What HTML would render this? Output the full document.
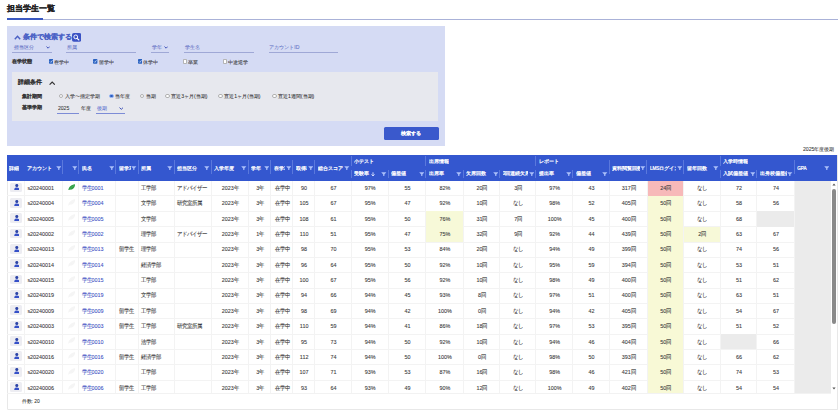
<!DOCTYPE html><html><head><meta charset="utf-8"><style>
*{box-sizing:border-box;margin:0;padding:0}
html,body{width:840px;height:415px;overflow:hidden;background:#fff}
body{position:relative;font-family:"Liberation Sans",sans-serif;color:#333;-webkit-text-stroke:0.06px currentColor}
.b{-webkit-text-stroke:0.04px currentColor}
.bt{-webkit-text-stroke:0.18px currentColor}
.ht{-webkit-text-stroke:0;font-weight:normal!important;-webkit-text-stroke:0.22px #fff}
.a{position:absolute;white-space:nowrap}
.b{font-weight:bold}
.cb{position:absolute;width:4.3px;height:4.3px;border-radius:0.8px}
.cb.on{background:#2f6fd8}
.cb.off{background:#fff;border:0.45px solid #b5b5b5;border-radius:0.8px}
.rd{position:absolute;width:4.6px;height:4.6px;border-radius:50%;background:#fff;border:0.4px solid #b0b0b0}
.rd.on{background:#2a5cc0;border:0.8px solid #9ab8f4}
.ul{position:absolute;height:1px;background:#9fa8d6}
.hd{position:absolute;top:155px;height:25.5px;background:#3457cf}
.ht{position:absolute;color:#fff;font-weight:bold;font-size:4.65px;white-space:nowrap;overflow:hidden}
.sep{position:absolute;width:1px;background:#5a78dc;margin-left:-0.5px}
.fl{position:absolute;width:0;height:0;border-left:2.4px solid transparent;border-right:2.4px solid transparent;border-top:3px solid #a9bdf7}
.fl:after{content:"";position:absolute;left:-0.7px;top:-0.5px;width:1.4px;height:2.4px;background:#a9bdf7}
.c{position:absolute;transform:scaleY(1.12);font-size:5.4px;color:#3a3a3a;-webkit-text-stroke:0.08px currentColor;white-space:nowrap;text-align:center}
.rl{position:absolute;height:0.8px;background:#f3f3f3}
.vl{position:absolute;width:0.8px;background:#f3f3f3}
</style></head><body><div class="a b bt" style="left:6.5px;top:3px;font-size:8.1px;line-height:11px;color:#222">担当学生一覧</div>
<div class="a" style="left:43px;top:19px;width:795px;height:1px;background:#aab2d8"></div>
<div class="a" style="left:6.5px;top:18px;width:36.5px;height:2px;background:#3b59c0"></div>
<div class="a" style="left:6.5px;top:26px;width:438.5px;height:119.5px;background:#d5dbf4"></div>
<svg class="a" style="left:14px;top:35px" width="7" height="5" viewBox="0 0 7 5"><path d="M0.8 4.2 L3.5 1.2 L6.2 4.2" fill="none" stroke="#4a5fc4" stroke-width="1.4"/></svg>
<div class="a b bt" style="left:22.9px;top:32px;font-size:6.9px;line-height:9px;color:#4c62c6">条件で検索する</div>
<svg class="a" style="left:72px;top:33px" width="9.2" height="8.8" viewBox="0 0 9.2 8.8"><rect width="9.2" height="8.8" rx="1.8" fill="#3a52c4"/><circle cx="3.75" cy="3.9" r="1.9" fill="none" stroke="#fff" stroke-width="0.95"/><line x1="5.1" y1="5.3" x2="6.9" y2="7" stroke="#fff" stroke-width="1.1" stroke-linecap="round"/></svg>
<div class="a" style="left:13.8px;top:43.5px;font-size:5.2px;line-height:7px;color:#5f6fc4">担当区分</div>
<svg class="a" style="left:46px;top:46.4px" width="4.2" height="3" viewBox="0 0 4.2 3"><path d="M0.5 0.6 L2.1 2.2 L3.7 0.6" fill="none" stroke="#3f52b8" stroke-width="1"/></svg>
<div class="ul" style="left:12.4px;top:51.5px;width:39.5px"></div>
<div class="a" style="left:66.7px;top:43.5px;font-size:5.2px;line-height:7px;color:#5f6fc4">所属</div>
<div class="ul" style="left:66.2px;top:51.5px;width:69.5px"></div>
<div class="a" style="left:152px;top:43.5px;font-size:5.2px;line-height:7px;color:#5f6fc4">学年</div>
<svg class="a" style="left:163.6px;top:46.4px" width="4.2" height="3" viewBox="0 0 4.2 3"><path d="M0.5 0.6 L2.1 2.2 L3.7 0.6" fill="none" stroke="#3f52b8" stroke-width="1"/></svg>
<div class="ul" style="left:150.7px;top:51.5px;width:18.6px"></div>
<div class="a" style="left:185px;top:43.5px;font-size:5.2px;line-height:7px;color:#5f6fc4">学生名</div>
<div class="ul" style="left:184px;top:51.5px;width:69.6px"></div>
<div class="a" style="left:269.3px;top:43.5px;font-size:5.2px;line-height:7px;color:#5f6fc4">アカウントID</div>
<div class="ul" style="left:268.75px;top:51.5px;width:69.6px"></div>
<div class="a b" style="left:12.3px;top:58px;font-size:5.2px;line-height:7px;color:#333">在学状態</div>
<svg class="a" style="left:48.9px;top:59px" width="4.4" height="4.7" viewBox="0 0 4.4 4.7"><rect x="0" y="0" width="4.4" height="4.7" rx="0.8" fill="#2a62c0"/><path d="M1 2.5 L1.9 3.4 L3.5 1.3" fill="none" stroke="#dfe9ff" stroke-width="0.7"/></svg>
<div class="a" style="left:54.4px;top:58.8px;font-size:5.2px;line-height:7px;color:#333">在学中</div>
<svg class="a" style="left:93.3px;top:59px" width="4.4" height="4.7" viewBox="0 0 4.4 4.7"><rect x="0" y="0" width="4.4" height="4.7" rx="0.8" fill="#2a62c0"/><path d="M1 2.5 L1.9 3.4 L3.5 1.3" fill="none" stroke="#dfe9ff" stroke-width="0.7"/></svg>
<div class="a" style="left:98.8px;top:58.8px;font-size:5.2px;line-height:7px;color:#333">留学中</div>
<svg class="a" style="left:137.9px;top:59px" width="4.4" height="4.7" viewBox="0 0 4.4 4.7"><rect x="0" y="0" width="4.4" height="4.7" rx="0.8" fill="#2a62c0"/><path d="M1 2.5 L1.9 3.4 L3.5 1.3" fill="none" stroke="#dfe9ff" stroke-width="0.7"/></svg>
<div class="a" style="left:143.4px;top:58.8px;font-size:5.2px;line-height:7px;color:#333">休学中</div>
<div class="cb off" style="left:183px;top:59.4px"></div>
<div class="a" style="left:188.4px;top:58.8px;font-size:5.2px;line-height:7px;color:#333">卒業</div>
<div class="cb off" style="left:223px;top:59.4px"></div>
<div class="a" style="left:228.4px;top:58.8px;font-size:5.2px;line-height:7px;color:#333">中途退学</div>
<div class="a" style="left:11.6px;top:72px;width:426.8px;height:48.5px;background:#e7e8ee"></div>
<div class="a b" style="left:18px;top:78.3px;font-size:6px;line-height:8px;color:#333">詳細条件</div>
<svg class="a" style="left:48.8px;top:81.2px" width="6.4" height="4.2" viewBox="0 0 6.4 4.2"><path d="M0.6 3.7 L3.2 1 L5.8 3.7" fill="none" stroke="#333" stroke-width="1.1"/></svg>
<div class="a b" style="left:21.7px;top:92.6px;font-size:5.1px;line-height:7px;color:#333">集計期間</div>
<div class="a b" style="left:21.7px;top:104px;font-size:5.1px;line-height:7px;color:#333">基準学期</div>
<div class="rd " style="left:58.6px;top:93.6px"></div>
<div class="a" style="left:64.6px;top:93.3px;font-size:5.1px;line-height:7px;color:#333">入学〜指定学期</div>
<div class="rd on" style="left:109.4px;top:93.6px"></div>
<div class="a" style="left:115.4px;top:93.3px;font-size:5.1px;line-height:7px;color:#333">当年度</div>
<div class="rd " style="left:139.7px;top:93.6px"></div>
<div class="a" style="left:145.7px;top:93.3px;font-size:5.1px;line-height:7px;color:#333">当期</div>
<div class="rd " style="left:165.2px;top:93.6px"></div>
<div class="a" style="left:171.2px;top:93.3px;font-size:5.1px;line-height:7px;color:#333">直近3ヶ月(当期)</div>
<div class="rd " style="left:218.3px;top:93.6px"></div>
<div class="a" style="left:224.3px;top:93.3px;font-size:5.1px;line-height:7px;color:#333">直近1ヶ月(当期)</div>
<div class="rd " style="left:272px;top:93.6px"></div>
<div class="a" style="left:278px;top:93.3px;font-size:5.1px;line-height:7px;color:#333">直近1週間(当期)</div>
<div class="a" style="left:57.9px;top:104.9px;font-size:5.1px;line-height:7px;color:#333">2025</div>
<div class="a" style="left:56.9px;top:112.5px;width:21.7px;height:0.7px;background:#7d8cd6"></div>
<div class="a" style="left:80.7px;top:104.9px;font-size:5.1px;line-height:7px;color:#333">年度</div>
<div class="a" style="left:97px;top:104.9px;font-size:5.1px;line-height:7px;color:#5a6fd0">後期</div>
<svg class="a" style="left:118.8px;top:107.4px" width="4.6" height="3" viewBox="0 0 4.6 3"><path d="M0.5 0.6 L2.3 2.3 L4.1 0.6" fill="none" stroke="#3f52b8" stroke-width="1"/></svg>
<div class="a" style="left:96px;top:112.5px;width:29px;height:0.7px;background:#7d8cd6"></div>
<div class="a b" style="left:383.6px;top:127px;width:55.4px;height:12.7px;background:#3a59cc;border-radius:1.5px;color:#fff;font-size:5.2px;line-height:12.7px;text-align:center">検索する</div>
<div class="a" style="left:802.9px;top:145.6px;font-size:5.2px;line-height:7px;color:#333">2025年度後期</div>
<div class="a" style="left:6.5px;top:155px;width:831px;height:255px;border:1px solid #e8e8e8;border-top:none;border-radius:0 0 1.5px 1.5px"></div>
<div class="a" style="left:7px;top:393px;width:824px;height:0.8px;background:#f2f2f2"></div>
<div class="hd" style="left:7px;width:830px"></div>
<div class="ht" style="left:8.9px;top:165.5px;line-height:6px">詳細</div>
<div class="ht" style="left:27.4px;top:165.5px;line-height:6px;width:27.8px">アカウント</div>
<svg class="a" style="left:55.6px;top:165.7px" width="5.6" height="4.8" viewBox="0 0 5.6 4.8"><path d="M0.2 0.3 H5.4 L3.4 2.6 V4.5 L2.2 4.5 V2.6 Z" fill="#abc0fa"/></svg>
<svg class="a" style="left:71.7px;top:165.7px" width="5.6" height="4.8" viewBox="0 0 5.6 4.8"><path d="M0.2 0.3 H5.4 L3.4 2.6 V4.5 L2.2 4.5 V2.6 Z" fill="#abc0fa"/></svg>
<div class="sep" style="left:62.5px;top:160.2px;height:13.7px"></div>
<div class="ht" style="left:81.6px;top:165.5px;line-height:6px;width:26.9px">氏名</div>
<svg class="a" style="left:108.9px;top:165.7px" width="5.6" height="4.8" viewBox="0 0 5.6 4.8"><path d="M0.2 0.3 H5.4 L3.4 2.6 V4.5 L2.2 4.5 V2.6 Z" fill="#abc0fa"/></svg>
<div class="sep" style="left:78.6px;top:160.2px;height:13.7px"></div>
<div class="ht" style="left:118.8px;top:165.5px;line-height:6px;width:12.1px">留学ｽﾃ</div>
<svg class="a" style="left:131.3px;top:165.7px" width="5.6" height="4.8" viewBox="0 0 5.6 4.8"><path d="M0.2 0.3 H5.4 L3.4 2.6 V4.5 L2.2 4.5 V2.6 Z" fill="#abc0fa"/></svg>
<div class="sep" style="left:115.8px;top:160.2px;height:13.7px"></div>
<div class="ht" style="left:141.2px;top:165.5px;line-height:6px;width:25.7px">所属</div>
<svg class="a" style="left:167.3px;top:165.7px" width="5.6" height="4.8" viewBox="0 0 5.6 4.8"><path d="M0.2 0.3 H5.4 L3.4 2.6 V4.5 L2.2 4.5 V2.6 Z" fill="#abc0fa"/></svg>
<div class="sep" style="left:138.2px;top:160.2px;height:13.7px"></div>
<div class="ht" style="left:177.2px;top:165.5px;line-height:6px;width:26.5px">担当区分</div>
<svg class="a" style="left:204.1px;top:165.7px" width="5.6" height="4.8" viewBox="0 0 5.6 4.8"><path d="M0.2 0.3 H5.4 L3.4 2.6 V4.5 L2.2 4.5 V2.6 Z" fill="#abc0fa"/></svg>
<div class="sep" style="left:174.2px;top:160.2px;height:13.7px"></div>
<div class="ht" style="left:214px;top:165.5px;line-height:6px;width:27px">入学年度</div>
<svg class="a" style="left:241.4px;top:165.7px" width="5.6" height="4.8" viewBox="0 0 5.6 4.8"><path d="M0.2 0.3 H5.4 L3.4 2.6 V4.5 L2.2 4.5 V2.6 Z" fill="#abc0fa"/></svg>
<div class="sep" style="left:211px;top:160.2px;height:13.7px"></div>
<div class="ht" style="left:251.3px;top:165.5px;line-height:6px;width:12.2px">学年</div>
<svg class="a" style="left:263.9px;top:165.7px" width="5.6" height="4.8" viewBox="0 0 5.6 4.8"><path d="M0.2 0.3 H5.4 L3.4 2.6 V4.5 L2.2 4.5 V2.6 Z" fill="#abc0fa"/></svg>
<div class="sep" style="left:248.3px;top:160.2px;height:13.7px"></div>
<div class="ht" style="left:273.8px;top:165.5px;line-height:6px;width:11.4px">在学ｽﾃ</div>
<svg class="a" style="left:285.6px;top:165.7px" width="5.6" height="4.8" viewBox="0 0 5.6 4.8"><path d="M0.2 0.3 H5.4 L3.4 2.6 V4.5 L2.2 4.5 V2.6 Z" fill="#abc0fa"/></svg>
<div class="sep" style="left:270.8px;top:160.2px;height:13.7px"></div>
<div class="ht" style="left:295.5px;top:165.5px;line-height:6px;width:11.7px">取得単位</div>
<svg class="a" style="left:307.6px;top:165.7px" width="5.6" height="4.8" viewBox="0 0 5.6 4.8"><path d="M0.2 0.3 H5.4 L3.4 2.6 V4.5 L2.2 4.5 V2.6 Z" fill="#abc0fa"/></svg>
<div class="sep" style="left:292.5px;top:160.2px;height:13.7px"></div>
<div class="ht" style="left:317.5px;top:165.5px;line-height:6px;width:26.5px">総合スコア</div>
<svg class="a" style="left:344.4px;top:165.7px" width="5.6" height="4.8" viewBox="0 0 5.6 4.8"><path d="M0.2 0.3 H5.4 L3.4 2.6 V4.5 L2.2 4.5 V2.6 Z" fill="#abc0fa"/></svg>
<div class="sep" style="left:314.5px;top:160.2px;height:13.7px"></div>
<div class="ht" style="left:612.2px;top:165.5px;line-height:6px;width:27.4px">資料閲覧回数</div>
<svg class="a" style="left:640px;top:165.7px" width="5.6" height="4.8" viewBox="0 0 5.6 4.8"><path d="M0.2 0.3 H5.4 L3.4 2.6 V4.5 L2.2 4.5 V2.6 Z" fill="#abc0fa"/></svg>
<div class="sep" style="left:609.2px;top:160.2px;height:13.7px"></div>
<div class="ht" style="left:649.9px;top:165.5px;line-height:6px;width:26.3px">LMSログイン</div>
<svg class="a" style="left:676.6px;top:165.7px" width="5.6" height="4.8" viewBox="0 0 5.6 4.8"><path d="M0.2 0.3 H5.4 L3.4 2.6 V4.5 L2.2 4.5 V2.6 Z" fill="#abc0fa"/></svg>
<div class="sep" style="left:646.9px;top:160.2px;height:13.7px"></div>
<div class="ht" style="left:686.5px;top:165.5px;line-height:6px;width:26.2px">留年回数</div>
<svg class="a" style="left:713.1px;top:165.7px" width="5.6" height="4.8" viewBox="0 0 5.6 4.8"><path d="M0.2 0.3 H5.4 L3.4 2.6 V4.5 L2.2 4.5 V2.6 Z" fill="#abc0fa"/></svg>
<div class="sep" style="left:683.5px;top:160.2px;height:13.7px"></div>
<div class="ht" style="left:797.2px;top:165.5px;line-height:6px;width:26.3px">GPA</div>
<svg class="a" style="left:823.9px;top:165.7px" width="5.6" height="4.8" viewBox="0 0 5.6 4.8"><path d="M0.2 0.3 H5.4 L3.4 2.6 V4.5 L2.2 4.5 V2.6 Z" fill="#abc0fa"/></svg>
<div class="sep" style="left:794.2px;top:160.2px;height:13.7px"></div>
<div class="ht" style="left:354.3px;top:158.9px;line-height:6px">小テスト</div>
<div class="sep" style="left:351.3px;top:156.2px;height:9.5px"></div>
<div class="sep" style="left:351.3px;top:169.9px;height:7.7px"></div>
<div class="ht" style="left:354.3px;top:171.1px;line-height:6px;width:26.4px">受験率</div>
<svg class="a" style="left:381.1px;top:171.7px" width="5.6" height="4.8" viewBox="0 0 5.6 4.8"><path d="M0.2 0.3 H5.4 L3.4 2.6 V4.5 L2.2 4.5 V2.6 Z" fill="#abc0fa"/></svg>
<div class="ht" style="left:391px;top:171.1px;line-height:6px;width:27.3px">偏差値</div>
<svg class="a" style="left:418.7px;top:171.7px" width="5.6" height="4.8" viewBox="0 0 5.6 4.8"><path d="M0.2 0.3 H5.4 L3.4 2.6 V4.5 L2.2 4.5 V2.6 Z" fill="#abc0fa"/></svg>
<div class="sep" style="left:388px;top:169.9px;height:7.7px"></div>
<div class="ht" style="left:428.6px;top:158.9px;line-height:6px">出席情報</div>
<div class="sep" style="left:425.6px;top:156.2px;height:9.5px"></div>
<div class="sep" style="left:425.6px;top:169.9px;height:7.7px"></div>
<div class="ht" style="left:428.6px;top:171.1px;line-height:6px;width:27.1px">出席率</div>
<svg class="a" style="left:456.1px;top:171.7px" width="5.6" height="4.8" viewBox="0 0 5.6 4.8"><path d="M0.2 0.3 H5.4 L3.4 2.6 V4.5 L2.2 4.5 V2.6 Z" fill="#abc0fa"/></svg>
<div class="ht" style="left:466px;top:171.1px;line-height:6px;width:26.4px">欠席回数</div>
<svg class="a" style="left:492.8px;top:171.7px" width="5.6" height="4.8" viewBox="0 0 5.6 4.8"><path d="M0.2 0.3 H5.4 L3.4 2.6 V4.5 L2.2 4.5 V2.6 Z" fill="#abc0fa"/></svg>
<div class="sep" style="left:463px;top:169.9px;height:7.7px"></div>
<div class="ht" style="left:502.7px;top:171.1px;line-height:6px;width:25.8px">3回連続欠席</div>
<svg class="a" style="left:528.9px;top:171.7px" width="5.6" height="4.8" viewBox="0 0 5.6 4.8"><path d="M0.2 0.3 H5.4 L3.4 2.6 V4.5 L2.2 4.5 V2.6 Z" fill="#abc0fa"/></svg>
<div class="sep" style="left:499.7px;top:169.9px;height:7.7px"></div>
<div class="ht" style="left:538.8px;top:158.9px;line-height:6px">レポート</div>
<div class="sep" style="left:535.8px;top:156.2px;height:9.5px"></div>
<div class="sep" style="left:535.8px;top:169.9px;height:7.7px"></div>
<div class="ht" style="left:538.8px;top:171.1px;line-height:6px;width:26.4px">提出率</div>
<svg class="a" style="left:565.6px;top:171.7px" width="5.6" height="4.8" viewBox="0 0 5.6 4.8"><path d="M0.2 0.3 H5.4 L3.4 2.6 V4.5 L2.2 4.5 V2.6 Z" fill="#abc0fa"/></svg>
<div class="ht" style="left:575.5px;top:171.1px;line-height:6px;width:26.4px">偏差値</div>
<svg class="a" style="left:602.3px;top:171.7px" width="5.6" height="4.8" viewBox="0 0 5.6 4.8"><path d="M0.2 0.3 H5.4 L3.4 2.6 V4.5 L2.2 4.5 V2.6 Z" fill="#abc0fa"/></svg>
<div class="sep" style="left:572.5px;top:169.9px;height:7.7px"></div>
<div class="ht" style="left:723px;top:158.9px;line-height:6px">入学時情報</div>
<div class="sep" style="left:720px;top:156.2px;height:9.5px"></div>
<div class="sep" style="left:720px;top:169.9px;height:7.7px"></div>
<div class="ht" style="left:723px;top:171.1px;line-height:6px;width:26.4px">入試偏差値</div>
<svg class="a" style="left:749.8px;top:171.7px" width="5.6" height="4.8" viewBox="0 0 5.6 4.8"><path d="M0.2 0.3 H5.4 L3.4 2.6 V4.5 L2.2 4.5 V2.6 Z" fill="#abc0fa"/></svg>
<div class="ht" style="left:759.7px;top:171.1px;line-height:6px;width:27.2px">出身校偏差値</div>
<svg class="a" style="left:787.3px;top:171.7px" width="5.6" height="4.8" viewBox="0 0 5.6 4.8"><path d="M0.2 0.3 H5.4 L3.4 2.6 V4.5 L2.2 4.5 V2.6 Z" fill="#abc0fa"/></svg>
<div class="sep" style="left:756.7px;top:169.9px;height:7.7px"></div>
<div class="sep" style="left:794.2px;top:160.2px;height:13.7px"></div>
<svg class="a" style="left:371.2px;top:171.6px" width="4" height="4.6" viewBox="0 0 4 4.6"><path d="M2 0.3 V4 M0.5 2.4 L2 4 L3.5 2.4" fill="none" stroke="#dfe6ff" stroke-width="0.9"/></svg>
<div class="a" style="left:7px;top:180.5px;width:824.3px;height:212.5px;overflow:hidden">
<div class="rl" style="left:0;top:14.95px;width:824.3px"></div>
<div class="a" style="left:2.9px;top:2.1px;width:12.3px;height:9.8px;background:#ededf2;border-radius:1.5px"></div>
<svg class="a" style="left:6.9px;top:3.7px" width="5.6" height="6.2" viewBox="0 0 5.6 6.2"><circle cx="2.8" cy="1.6" r="1.5" fill="#2b43a6"/><path d="M0.3 6 V5.3 C0.3 4.1 1.4 3.5 2.8 3.5 C4.2 3.5 5.3 4.1 5.3 5.3 V6 Z" fill="#3550c8"/></svg>
<div class="c" style="left:20.4px;top:0.5px;line-height:15.35px;text-align:left;color:#3a3a3a">s20240001</div>
<svg class="a" style="left:60.7px;top:3.1px" width="7.4" height="6.8" viewBox="0 0 7.4 6.8"><path d="M0.3 6.5 C0.6 3.4 2.6 0.9 7.1 0.3 C7 3.6 5.2 6.1 1.9 5.6 C1.4 5.9 0.9 6.3 0.6 6.7 Z" fill="#34a048"/><path d="M1.2 5.8 C2.8 4 4.6 2.2 6.6 0.8" stroke="#5cc06a" stroke-width="0.4" fill="none"/></svg>
<div class="c" style="left:74.6px;top:0.5px;line-height:15.35px;text-align:left;color:#4252c4">学生0001</div>
<div class="c" style="left:134.2px;top:0.5px;line-height:15.35px;text-align:left;color:#3a3a3a">工学部</div>
<div class="c" style="left:170.2px;top:0.5px;line-height:15.35px;text-align:left;color:#3a3a3a">アドバイザー</div>
<div class="c" style="left:204.6px;top:0.5px;width:37.3px;line-height:15.35px">2023年</div>
<div class="c" style="left:241.9px;top:0.5px;width:22.5px;line-height:15.35px">3年</div>
<div class="c" style="left:264.4px;top:0.5px;width:21.7px;line-height:15.35px">在学中</div>
<div class="c" style="left:286.1px;top:0.5px;width:22px;line-height:15.35px">90</div>
<div class="c" style="left:308.1px;top:0.5px;width:36.8px;line-height:15.35px">67</div>
<div class="c" style="left:344.9px;top:0.5px;width:36.7px;line-height:15.35px">97%</div>
<div class="c" style="left:381.6px;top:0.5px;width:37.6px;line-height:15.35px">55</div>
<div class="c" style="left:419.2px;top:0.5px;width:37.4px;line-height:15.35px">82%</div>
<div class="c" style="left:456.6px;top:0.5px;width:36.7px;line-height:15.35px">20回</div>
<div class="c" style="left:493.3px;top:0.5px;width:36.1px;line-height:15.35px">3回</div>
<div class="c" style="left:529.4px;top:0.5px;width:36.7px;line-height:15.35px">97%</div>
<div class="c" style="left:566.1px;top:0.5px;width:36.7px;line-height:15.35px">43</div>
<div class="c" style="left:602.8px;top:0.5px;width:37.7px;line-height:15.35px">317回</div>
<div class="a" style="left:639.9px;top:0px;width:36.6px;height:15.35px;background:#f7b9b9"></div>
<div class="c" style="left:640.5px;top:0.5px;width:36.6px;line-height:15.35px">24回</div>
<div class="c" style="left:677.1px;top:0.5px;width:36.5px;line-height:15.35px">なし</div>
<div class="c" style="left:713.6px;top:0.5px;width:36.7px;line-height:15.35px">72</div>
<div class="c" style="left:750.3px;top:0.5px;width:37.5px;line-height:15.35px">74</div>
<div class="a" style="left:787.2px;top:0px;width:37.1px;height:15.35px;background:#ebebeb"></div>
<div class="rl" style="left:0;top:30.3px;width:824.3px"></div>
<div class="a" style="left:2.9px;top:17.45px;width:12.3px;height:9.8px;background:#ededf2;border-radius:1.5px"></div>
<svg class="a" style="left:6.9px;top:19.05px" width="5.6" height="6.2" viewBox="0 0 5.6 6.2"><circle cx="2.8" cy="1.6" r="1.5" fill="#2b43a6"/><path d="M0.3 6 V5.3 C0.3 4.1 1.4 3.5 2.8 3.5 C4.2 3.5 5.3 4.1 5.3 5.3 V6 Z" fill="#3550c8"/></svg>
<div class="c" style="left:20.4px;top:15.85px;line-height:15.35px;text-align:left;color:#3a3a3a">s20240004</div>
<svg class="a" style="left:60.7px;top:18.45px" width="7.4" height="6.8" viewBox="0 0 7.4 6.8"><path d="M0.3 6.5 C0.6 3.4 2.6 0.9 7.1 0.3 C7 3.6 5.2 6.1 1.9 5.6 C1.4 5.9 0.9 6.3 0.6 6.7 Z" fill="#f5f5f5"/><path d="M1.2 5.8 C2.8 4 4.6 2.2 6.6 0.8" stroke="#f5f5f5" stroke-width="0.4" fill="none"/></svg>
<div class="c" style="left:74.6px;top:15.85px;line-height:15.35px;text-align:left;color:#4252c4">学生0004</div>
<div class="c" style="left:134.2px;top:15.85px;line-height:15.35px;text-align:left;color:#3a3a3a">文学部</div>
<div class="c" style="left:170.2px;top:15.85px;line-height:15.35px;text-align:left;color:#3a3a3a">研究室所属</div>
<div class="c" style="left:204.6px;top:15.85px;width:37.3px;line-height:15.35px">2023年</div>
<div class="c" style="left:241.9px;top:15.85px;width:22.5px;line-height:15.35px">3年</div>
<div class="c" style="left:264.4px;top:15.85px;width:21.7px;line-height:15.35px">在学中</div>
<div class="c" style="left:286.1px;top:15.85px;width:22px;line-height:15.35px">105</div>
<div class="c" style="left:308.1px;top:15.85px;width:36.8px;line-height:15.35px">67</div>
<div class="c" style="left:344.9px;top:15.85px;width:36.7px;line-height:15.35px">95%</div>
<div class="c" style="left:381.6px;top:15.85px;width:37.6px;line-height:15.35px">47</div>
<div class="c" style="left:419.2px;top:15.85px;width:37.4px;line-height:15.35px">92%</div>
<div class="c" style="left:456.6px;top:15.85px;width:36.7px;line-height:15.35px">10回</div>
<div class="c" style="left:493.3px;top:15.85px;width:36.1px;line-height:15.35px">なし</div>
<div class="c" style="left:529.4px;top:15.85px;width:36.7px;line-height:15.35px">98%</div>
<div class="c" style="left:566.1px;top:15.85px;width:36.7px;line-height:15.35px">52</div>
<div class="c" style="left:602.8px;top:15.85px;width:37.7px;line-height:15.35px">405回</div>
<div class="a" style="left:639.9px;top:15.35px;width:36.6px;height:15.35px;background:#f8f9d6"></div>
<div class="c" style="left:640.5px;top:15.85px;width:36.6px;line-height:15.35px">50回</div>
<div class="c" style="left:677.1px;top:15.85px;width:36.5px;line-height:15.35px">なし</div>
<div class="c" style="left:713.6px;top:15.85px;width:36.7px;line-height:15.35px">58</div>
<div class="c" style="left:750.3px;top:15.85px;width:37.5px;line-height:15.35px">56</div>
<div class="a" style="left:787.2px;top:15.35px;width:37.1px;height:15.35px;background:#ebebeb"></div>
<div class="rl" style="left:0;top:45.65px;width:824.3px"></div>
<div class="a" style="left:2.9px;top:32.8px;width:12.3px;height:9.8px;background:#ededf2;border-radius:1.5px"></div>
<svg class="a" style="left:6.9px;top:34.4px" width="5.6" height="6.2" viewBox="0 0 5.6 6.2"><circle cx="2.8" cy="1.6" r="1.5" fill="#2b43a6"/><path d="M0.3 6 V5.3 C0.3 4.1 1.4 3.5 2.8 3.5 C4.2 3.5 5.3 4.1 5.3 5.3 V6 Z" fill="#3550c8"/></svg>
<div class="c" style="left:20.4px;top:31.2px;line-height:15.35px;text-align:left;color:#3a3a3a">s20240005</div>
<svg class="a" style="left:60.7px;top:33.8px" width="7.4" height="6.8" viewBox="0 0 7.4 6.8"><path d="M0.3 6.5 C0.6 3.4 2.6 0.9 7.1 0.3 C7 3.6 5.2 6.1 1.9 5.6 C1.4 5.9 0.9 6.3 0.6 6.7 Z" fill="#f5f5f5"/><path d="M1.2 5.8 C2.8 4 4.6 2.2 6.6 0.8" stroke="#f5f5f5" stroke-width="0.4" fill="none"/></svg>
<div class="c" style="left:74.6px;top:31.2px;line-height:15.35px;text-align:left;color:#4252c4">学生0005</div>
<div class="c" style="left:134.2px;top:31.2px;line-height:15.35px;text-align:left;color:#3a3a3a">文学部</div>
<div class="c" style="left:204.6px;top:31.2px;width:37.3px;line-height:15.35px">2023年</div>
<div class="c" style="left:241.9px;top:31.2px;width:22.5px;line-height:15.35px">3年</div>
<div class="c" style="left:264.4px;top:31.2px;width:21.7px;line-height:15.35px">在学中</div>
<div class="c" style="left:286.1px;top:31.2px;width:22px;line-height:15.35px">108</div>
<div class="c" style="left:308.1px;top:31.2px;width:36.8px;line-height:15.35px">61</div>
<div class="c" style="left:344.9px;top:31.2px;width:36.7px;line-height:15.35px">95%</div>
<div class="c" style="left:381.6px;top:31.2px;width:37.6px;line-height:15.35px">50</div>
<div class="a" style="left:418.6px;top:30.7px;width:37.4px;height:15.35px;background:#f7f9d8"></div>
<div class="c" style="left:419.2px;top:31.2px;width:37.4px;line-height:15.35px">76%</div>
<div class="c" style="left:456.6px;top:31.2px;width:36.7px;line-height:15.35px">31回</div>
<div class="c" style="left:493.3px;top:31.2px;width:36.1px;line-height:15.35px">7回</div>
<div class="c" style="left:529.4px;top:31.2px;width:36.7px;line-height:15.35px">100%</div>
<div class="c" style="left:566.1px;top:31.2px;width:36.7px;line-height:15.35px">45</div>
<div class="c" style="left:602.8px;top:31.2px;width:37.7px;line-height:15.35px">400回</div>
<div class="a" style="left:639.9px;top:30.7px;width:36.6px;height:15.35px;background:#f8f9d6"></div>
<div class="c" style="left:640.5px;top:31.2px;width:36.6px;line-height:15.35px">50回</div>
<div class="c" style="left:677.1px;top:31.2px;width:36.5px;line-height:15.35px">なし</div>
<div class="c" style="left:713.6px;top:31.2px;width:36.7px;line-height:15.35px">68</div>
<div class="a" style="left:749.7px;top:30.7px;width:37.5px;height:15.35px;background:#ebebeb"></div>
<div class="a" style="left:787.2px;top:30.7px;width:37.1px;height:15.35px;background:#ebebeb"></div>
<div class="rl" style="left:0;top:61px;width:824.3px"></div>
<div class="a" style="left:2.9px;top:48.15px;width:12.3px;height:9.8px;background:#ededf2;border-radius:1.5px"></div>
<svg class="a" style="left:6.9px;top:49.75px" width="5.6" height="6.2" viewBox="0 0 5.6 6.2"><circle cx="2.8" cy="1.6" r="1.5" fill="#2b43a6"/><path d="M0.3 6 V5.3 C0.3 4.1 1.4 3.5 2.8 3.5 C4.2 3.5 5.3 4.1 5.3 5.3 V6 Z" fill="#3550c8"/></svg>
<div class="c" style="left:20.4px;top:46.55px;line-height:15.35px;text-align:left;color:#3a3a3a">s20240002</div>
<svg class="a" style="left:60.7px;top:49.15px" width="7.4" height="6.8" viewBox="0 0 7.4 6.8"><path d="M0.3 6.5 C0.6 3.4 2.6 0.9 7.1 0.3 C7 3.6 5.2 6.1 1.9 5.6 C1.4 5.9 0.9 6.3 0.6 6.7 Z" fill="#f5f5f5"/><path d="M1.2 5.8 C2.8 4 4.6 2.2 6.6 0.8" stroke="#f5f5f5" stroke-width="0.4" fill="none"/></svg>
<div class="c" style="left:74.6px;top:46.55px;line-height:15.35px;text-align:left;color:#4252c4">学生0002</div>
<div class="c" style="left:134.2px;top:46.55px;line-height:15.35px;text-align:left;color:#3a3a3a">理学部</div>
<div class="c" style="left:170.2px;top:46.55px;line-height:15.35px;text-align:left;color:#3a3a3a">アドバイザー</div>
<div class="c" style="left:204.6px;top:46.55px;width:37.3px;line-height:15.35px">2023年</div>
<div class="c" style="left:241.9px;top:46.55px;width:22.5px;line-height:15.35px">1年</div>
<div class="c" style="left:264.4px;top:46.55px;width:21.7px;line-height:15.35px">在学中</div>
<div class="c" style="left:286.1px;top:46.55px;width:22px;line-height:15.35px">110</div>
<div class="c" style="left:308.1px;top:46.55px;width:36.8px;line-height:15.35px">51</div>
<div class="c" style="left:344.9px;top:46.55px;width:36.7px;line-height:15.35px">95%</div>
<div class="c" style="left:381.6px;top:46.55px;width:37.6px;line-height:15.35px">47</div>
<div class="a" style="left:418.6px;top:46.05px;width:37.4px;height:15.35px;background:#f7f9d8"></div>
<div class="c" style="left:419.2px;top:46.55px;width:37.4px;line-height:15.35px">75%</div>
<div class="c" style="left:456.6px;top:46.55px;width:36.7px;line-height:15.35px">32回</div>
<div class="c" style="left:493.3px;top:46.55px;width:36.1px;line-height:15.35px">9回</div>
<div class="c" style="left:529.4px;top:46.55px;width:36.7px;line-height:15.35px">92%</div>
<div class="c" style="left:566.1px;top:46.55px;width:36.7px;line-height:15.35px">44</div>
<div class="c" style="left:602.8px;top:46.55px;width:37.7px;line-height:15.35px">439回</div>
<div class="a" style="left:639.9px;top:46.05px;width:36.6px;height:15.35px;background:#f8f9d6"></div>
<div class="c" style="left:640.5px;top:46.55px;width:36.6px;line-height:15.35px">50回</div>
<div class="a" style="left:676.5px;top:46.05px;width:36.5px;height:15.35px;background:#f7f9d8"></div>
<div class="c" style="left:677.1px;top:46.55px;width:36.5px;line-height:15.35px">2回</div>
<div class="c" style="left:713.6px;top:46.55px;width:36.7px;line-height:15.35px">63</div>
<div class="c" style="left:750.3px;top:46.55px;width:37.5px;line-height:15.35px">67</div>
<div class="a" style="left:787.2px;top:46.05px;width:37.1px;height:15.35px;background:#ebebeb"></div>
<div class="rl" style="left:0;top:76.35px;width:824.3px"></div>
<div class="a" style="left:2.9px;top:63.5px;width:12.3px;height:9.8px;background:#ededf2;border-radius:1.5px"></div>
<svg class="a" style="left:6.9px;top:65.1px" width="5.6" height="6.2" viewBox="0 0 5.6 6.2"><circle cx="2.8" cy="1.6" r="1.5" fill="#2b43a6"/><path d="M0.3 6 V5.3 C0.3 4.1 1.4 3.5 2.8 3.5 C4.2 3.5 5.3 4.1 5.3 5.3 V6 Z" fill="#3550c8"/></svg>
<div class="c" style="left:20.4px;top:61.9px;line-height:15.35px;text-align:left;color:#3a3a3a">s20240013</div>
<svg class="a" style="left:60.7px;top:64.5px" width="7.4" height="6.8" viewBox="0 0 7.4 6.8"><path d="M0.3 6.5 C0.6 3.4 2.6 0.9 7.1 0.3 C7 3.6 5.2 6.1 1.9 5.6 C1.4 5.9 0.9 6.3 0.6 6.7 Z" fill="#f5f5f5"/><path d="M1.2 5.8 C2.8 4 4.6 2.2 6.6 0.8" stroke="#f5f5f5" stroke-width="0.4" fill="none"/></svg>
<div class="c" style="left:74.6px;top:61.9px;line-height:15.35px;text-align:left;color:#4252c4">学生0013</div>
<div class="c" style="left:111.8px;top:61.9px;line-height:15.35px;text-align:left;color:#3a3a3a">留学生</div>
<div class="c" style="left:134.2px;top:61.9px;line-height:15.35px;text-align:left;color:#3a3a3a">理学部</div>
<div class="c" style="left:204.6px;top:61.9px;width:37.3px;line-height:15.35px">2023年</div>
<div class="c" style="left:241.9px;top:61.9px;width:22.5px;line-height:15.35px">3年</div>
<div class="c" style="left:264.4px;top:61.9px;width:21.7px;line-height:15.35px">在学中</div>
<div class="c" style="left:286.1px;top:61.9px;width:22px;line-height:15.35px">98</div>
<div class="c" style="left:308.1px;top:61.9px;width:36.8px;line-height:15.35px">70</div>
<div class="c" style="left:344.9px;top:61.9px;width:36.7px;line-height:15.35px">95%</div>
<div class="c" style="left:381.6px;top:61.9px;width:37.6px;line-height:15.35px">53</div>
<div class="c" style="left:419.2px;top:61.9px;width:37.4px;line-height:15.35px">84%</div>
<div class="c" style="left:456.6px;top:61.9px;width:36.7px;line-height:15.35px">20回</div>
<div class="c" style="left:493.3px;top:61.9px;width:36.1px;line-height:15.35px">なし</div>
<div class="c" style="left:529.4px;top:61.9px;width:36.7px;line-height:15.35px">94%</div>
<div class="c" style="left:566.1px;top:61.9px;width:36.7px;line-height:15.35px">49</div>
<div class="c" style="left:602.8px;top:61.9px;width:37.7px;line-height:15.35px">399回</div>
<div class="a" style="left:639.9px;top:61.4px;width:36.6px;height:15.35px;background:#f8f9d6"></div>
<div class="c" style="left:640.5px;top:61.9px;width:36.6px;line-height:15.35px">50回</div>
<div class="c" style="left:677.1px;top:61.9px;width:36.5px;line-height:15.35px">なし</div>
<div class="c" style="left:713.6px;top:61.9px;width:36.7px;line-height:15.35px">74</div>
<div class="c" style="left:750.3px;top:61.9px;width:37.5px;line-height:15.35px">56</div>
<div class="a" style="left:787.2px;top:61.4px;width:37.1px;height:15.35px;background:#ebebeb"></div>
<div class="rl" style="left:0;top:91.7px;width:824.3px"></div>
<div class="a" style="left:2.9px;top:78.85px;width:12.3px;height:9.8px;background:#ededf2;border-radius:1.5px"></div>
<svg class="a" style="left:6.9px;top:80.45px" width="5.6" height="6.2" viewBox="0 0 5.6 6.2"><circle cx="2.8" cy="1.6" r="1.5" fill="#2b43a6"/><path d="M0.3 6 V5.3 C0.3 4.1 1.4 3.5 2.8 3.5 C4.2 3.5 5.3 4.1 5.3 5.3 V6 Z" fill="#3550c8"/></svg>
<div class="c" style="left:20.4px;top:77.25px;line-height:15.35px;text-align:left;color:#3a3a3a">s20240014</div>
<svg class="a" style="left:60.7px;top:79.85px" width="7.4" height="6.8" viewBox="0 0 7.4 6.8"><path d="M0.3 6.5 C0.6 3.4 2.6 0.9 7.1 0.3 C7 3.6 5.2 6.1 1.9 5.6 C1.4 5.9 0.9 6.3 0.6 6.7 Z" fill="#f5f5f5"/><path d="M1.2 5.8 C2.8 4 4.6 2.2 6.6 0.8" stroke="#f5f5f5" stroke-width="0.4" fill="none"/></svg>
<div class="c" style="left:74.6px;top:77.25px;line-height:15.35px;text-align:left;color:#4252c4">学生0014</div>
<div class="c" style="left:134.2px;top:77.25px;line-height:15.35px;text-align:left;color:#3a3a3a">経済学部</div>
<div class="c" style="left:204.6px;top:77.25px;width:37.3px;line-height:15.35px">2023年</div>
<div class="c" style="left:241.9px;top:77.25px;width:22.5px;line-height:15.35px">3年</div>
<div class="c" style="left:264.4px;top:77.25px;width:21.7px;line-height:15.35px">在学中</div>
<div class="c" style="left:286.1px;top:77.25px;width:22px;line-height:15.35px">96</div>
<div class="c" style="left:308.1px;top:77.25px;width:36.8px;line-height:15.35px">64</div>
<div class="c" style="left:344.9px;top:77.25px;width:36.7px;line-height:15.35px">95%</div>
<div class="c" style="left:381.6px;top:77.25px;width:37.6px;line-height:15.35px">50</div>
<div class="c" style="left:419.2px;top:77.25px;width:37.4px;line-height:15.35px">92%</div>
<div class="c" style="left:456.6px;top:77.25px;width:36.7px;line-height:15.35px">10回</div>
<div class="c" style="left:493.3px;top:77.25px;width:36.1px;line-height:15.35px">なし</div>
<div class="c" style="left:529.4px;top:77.25px;width:36.7px;line-height:15.35px">95%</div>
<div class="c" style="left:566.1px;top:77.25px;width:36.7px;line-height:15.35px">59</div>
<div class="c" style="left:602.8px;top:77.25px;width:37.7px;line-height:15.35px">394回</div>
<div class="a" style="left:639.9px;top:76.75px;width:36.6px;height:15.35px;background:#f8f9d6"></div>
<div class="c" style="left:640.5px;top:77.25px;width:36.6px;line-height:15.35px">50回</div>
<div class="c" style="left:677.1px;top:77.25px;width:36.5px;line-height:15.35px">なし</div>
<div class="c" style="left:713.6px;top:77.25px;width:36.7px;line-height:15.35px">53</div>
<div class="c" style="left:750.3px;top:77.25px;width:37.5px;line-height:15.35px">51</div>
<div class="a" style="left:787.2px;top:76.75px;width:37.1px;height:15.35px;background:#ebebeb"></div>
<div class="rl" style="left:0;top:107.05px;width:824.3px"></div>
<div class="a" style="left:2.9px;top:94.2px;width:12.3px;height:9.8px;background:#ededf2;border-radius:1.5px"></div>
<svg class="a" style="left:6.9px;top:95.8px" width="5.6" height="6.2" viewBox="0 0 5.6 6.2"><circle cx="2.8" cy="1.6" r="1.5" fill="#2b43a6"/><path d="M0.3 6 V5.3 C0.3 4.1 1.4 3.5 2.8 3.5 C4.2 3.5 5.3 4.1 5.3 5.3 V6 Z" fill="#3550c8"/></svg>
<div class="c" style="left:20.4px;top:92.6px;line-height:15.35px;text-align:left;color:#3a3a3a">s20240015</div>
<svg class="a" style="left:60.7px;top:95.2px" width="7.4" height="6.8" viewBox="0 0 7.4 6.8"><path d="M0.3 6.5 C0.6 3.4 2.6 0.9 7.1 0.3 C7 3.6 5.2 6.1 1.9 5.6 C1.4 5.9 0.9 6.3 0.6 6.7 Z" fill="#f5f5f5"/><path d="M1.2 5.8 C2.8 4 4.6 2.2 6.6 0.8" stroke="#f5f5f5" stroke-width="0.4" fill="none"/></svg>
<div class="c" style="left:74.6px;top:92.6px;line-height:15.35px;text-align:left;color:#4252c4">学生0015</div>
<div class="c" style="left:134.2px;top:92.6px;line-height:15.35px;text-align:left;color:#3a3a3a">工学部</div>
<div class="c" style="left:204.6px;top:92.6px;width:37.3px;line-height:15.35px">2023年</div>
<div class="c" style="left:241.9px;top:92.6px;width:22.5px;line-height:15.35px">3年</div>
<div class="c" style="left:264.4px;top:92.6px;width:21.7px;line-height:15.35px">在学中</div>
<div class="c" style="left:286.1px;top:92.6px;width:22px;line-height:15.35px">100</div>
<div class="c" style="left:308.1px;top:92.6px;width:36.8px;line-height:15.35px">67</div>
<div class="c" style="left:344.9px;top:92.6px;width:36.7px;line-height:15.35px">95%</div>
<div class="c" style="left:381.6px;top:92.6px;width:37.6px;line-height:15.35px">56</div>
<div class="c" style="left:419.2px;top:92.6px;width:37.4px;line-height:15.35px">92%</div>
<div class="c" style="left:456.6px;top:92.6px;width:36.7px;line-height:15.35px">10回</div>
<div class="c" style="left:493.3px;top:92.6px;width:36.1px;line-height:15.35px">なし</div>
<div class="c" style="left:529.4px;top:92.6px;width:36.7px;line-height:15.35px">98%</div>
<div class="c" style="left:566.1px;top:92.6px;width:36.7px;line-height:15.35px">49</div>
<div class="c" style="left:602.8px;top:92.6px;width:37.7px;line-height:15.35px">400回</div>
<div class="a" style="left:639.9px;top:92.1px;width:36.6px;height:15.35px;background:#f8f9d6"></div>
<div class="c" style="left:640.5px;top:92.6px;width:36.6px;line-height:15.35px">50回</div>
<div class="c" style="left:677.1px;top:92.6px;width:36.5px;line-height:15.35px">なし</div>
<div class="c" style="left:713.6px;top:92.6px;width:36.7px;line-height:15.35px">51</div>
<div class="c" style="left:750.3px;top:92.6px;width:37.5px;line-height:15.35px">62</div>
<div class="a" style="left:787.2px;top:92.1px;width:37.1px;height:15.35px;background:#ebebeb"></div>
<div class="rl" style="left:0;top:122.4px;width:824.3px"></div>
<div class="a" style="left:2.9px;top:109.55px;width:12.3px;height:9.8px;background:#ededf2;border-radius:1.5px"></div>
<svg class="a" style="left:6.9px;top:111.15px" width="5.6" height="6.2" viewBox="0 0 5.6 6.2"><circle cx="2.8" cy="1.6" r="1.5" fill="#2b43a6"/><path d="M0.3 6 V5.3 C0.3 4.1 1.4 3.5 2.8 3.5 C4.2 3.5 5.3 4.1 5.3 5.3 V6 Z" fill="#3550c8"/></svg>
<div class="c" style="left:20.4px;top:107.95px;line-height:15.35px;text-align:left;color:#3a3a3a">s20240019</div>
<svg class="a" style="left:60.7px;top:110.55px" width="7.4" height="6.8" viewBox="0 0 7.4 6.8"><path d="M0.3 6.5 C0.6 3.4 2.6 0.9 7.1 0.3 C7 3.6 5.2 6.1 1.9 5.6 C1.4 5.9 0.9 6.3 0.6 6.7 Z" fill="#f5f5f5"/><path d="M1.2 5.8 C2.8 4 4.6 2.2 6.6 0.8" stroke="#f5f5f5" stroke-width="0.4" fill="none"/></svg>
<div class="c" style="left:74.6px;top:107.95px;line-height:15.35px;text-align:left;color:#4252c4">学生0019</div>
<div class="c" style="left:134.2px;top:107.95px;line-height:15.35px;text-align:left;color:#3a3a3a">文学部</div>
<div class="c" style="left:204.6px;top:107.95px;width:37.3px;line-height:15.35px">2023年</div>
<div class="c" style="left:241.9px;top:107.95px;width:22.5px;line-height:15.35px">3年</div>
<div class="c" style="left:264.4px;top:107.95px;width:21.7px;line-height:15.35px">在学中</div>
<div class="c" style="left:286.1px;top:107.95px;width:22px;line-height:15.35px">94</div>
<div class="c" style="left:308.1px;top:107.95px;width:36.8px;line-height:15.35px">66</div>
<div class="c" style="left:344.9px;top:107.95px;width:36.7px;line-height:15.35px">94%</div>
<div class="c" style="left:381.6px;top:107.95px;width:37.6px;line-height:15.35px">45</div>
<div class="c" style="left:419.2px;top:107.95px;width:37.4px;line-height:15.35px">93%</div>
<div class="c" style="left:456.6px;top:107.95px;width:36.7px;line-height:15.35px">8回</div>
<div class="c" style="left:493.3px;top:107.95px;width:36.1px;line-height:15.35px">なし</div>
<div class="c" style="left:529.4px;top:107.95px;width:36.7px;line-height:15.35px">97%</div>
<div class="c" style="left:566.1px;top:107.95px;width:36.7px;line-height:15.35px">51</div>
<div class="c" style="left:602.8px;top:107.95px;width:37.7px;line-height:15.35px">400回</div>
<div class="a" style="left:639.9px;top:107.45px;width:36.6px;height:15.35px;background:#f8f9d6"></div>
<div class="c" style="left:640.5px;top:107.95px;width:36.6px;line-height:15.35px">50回</div>
<div class="c" style="left:677.1px;top:107.95px;width:36.5px;line-height:15.35px">なし</div>
<div class="c" style="left:713.6px;top:107.95px;width:36.7px;line-height:15.35px">63</div>
<div class="c" style="left:750.3px;top:107.95px;width:37.5px;line-height:15.35px">51</div>
<div class="a" style="left:787.2px;top:107.45px;width:37.1px;height:15.35px;background:#ebebeb"></div>
<div class="rl" style="left:0;top:137.75px;width:824.3px"></div>
<div class="a" style="left:2.9px;top:124.9px;width:12.3px;height:9.8px;background:#ededf2;border-radius:1.5px"></div>
<svg class="a" style="left:6.9px;top:126.5px" width="5.6" height="6.2" viewBox="0 0 5.6 6.2"><circle cx="2.8" cy="1.6" r="1.5" fill="#2b43a6"/><path d="M0.3 6 V5.3 C0.3 4.1 1.4 3.5 2.8 3.5 C4.2 3.5 5.3 4.1 5.3 5.3 V6 Z" fill="#3550c8"/></svg>
<div class="c" style="left:20.4px;top:123.3px;line-height:15.35px;text-align:left;color:#3a3a3a">s20240009</div>
<svg class="a" style="left:60.7px;top:125.9px" width="7.4" height="6.8" viewBox="0 0 7.4 6.8"><path d="M0.3 6.5 C0.6 3.4 2.6 0.9 7.1 0.3 C7 3.6 5.2 6.1 1.9 5.6 C1.4 5.9 0.9 6.3 0.6 6.7 Z" fill="#f5f5f5"/><path d="M1.2 5.8 C2.8 4 4.6 2.2 6.6 0.8" stroke="#f5f5f5" stroke-width="0.4" fill="none"/></svg>
<div class="c" style="left:74.6px;top:123.3px;line-height:15.35px;text-align:left;color:#4252c4">学生0009</div>
<div class="c" style="left:111.8px;top:123.3px;line-height:15.35px;text-align:left;color:#3a3a3a">留学生</div>
<div class="c" style="left:134.2px;top:123.3px;line-height:15.35px;text-align:left;color:#3a3a3a">工学部</div>
<div class="c" style="left:204.6px;top:123.3px;width:37.3px;line-height:15.35px">2023年</div>
<div class="c" style="left:241.9px;top:123.3px;width:22.5px;line-height:15.35px">3年</div>
<div class="c" style="left:264.4px;top:123.3px;width:21.7px;line-height:15.35px">在学中</div>
<div class="c" style="left:286.1px;top:123.3px;width:22px;line-height:15.35px">98</div>
<div class="c" style="left:308.1px;top:123.3px;width:36.8px;line-height:15.35px">69</div>
<div class="c" style="left:344.9px;top:123.3px;width:36.7px;line-height:15.35px">94%</div>
<div class="c" style="left:381.6px;top:123.3px;width:37.6px;line-height:15.35px">42</div>
<div class="c" style="left:419.2px;top:123.3px;width:37.4px;line-height:15.35px">100%</div>
<div class="c" style="left:456.6px;top:123.3px;width:36.7px;line-height:15.35px">0回</div>
<div class="c" style="left:493.3px;top:123.3px;width:36.1px;line-height:15.35px">なし</div>
<div class="c" style="left:529.4px;top:123.3px;width:36.7px;line-height:15.35px">94%</div>
<div class="c" style="left:566.1px;top:123.3px;width:36.7px;line-height:15.35px">42</div>
<div class="c" style="left:602.8px;top:123.3px;width:37.7px;line-height:15.35px">405回</div>
<div class="a" style="left:639.9px;top:122.8px;width:36.6px;height:15.35px;background:#f8f9d6"></div>
<div class="c" style="left:640.5px;top:123.3px;width:36.6px;line-height:15.35px">50回</div>
<div class="c" style="left:677.1px;top:123.3px;width:36.5px;line-height:15.35px">なし</div>
<div class="c" style="left:713.6px;top:123.3px;width:36.7px;line-height:15.35px">54</div>
<div class="c" style="left:750.3px;top:123.3px;width:37.5px;line-height:15.35px">67</div>
<div class="a" style="left:787.2px;top:122.8px;width:37.1px;height:15.35px;background:#ebebeb"></div>
<div class="rl" style="left:0;top:153.1px;width:824.3px"></div>
<div class="a" style="left:2.9px;top:140.25px;width:12.3px;height:9.8px;background:#ededf2;border-radius:1.5px"></div>
<svg class="a" style="left:6.9px;top:141.85px" width="5.6" height="6.2" viewBox="0 0 5.6 6.2"><circle cx="2.8" cy="1.6" r="1.5" fill="#2b43a6"/><path d="M0.3 6 V5.3 C0.3 4.1 1.4 3.5 2.8 3.5 C4.2 3.5 5.3 4.1 5.3 5.3 V6 Z" fill="#3550c8"/></svg>
<div class="c" style="left:20.4px;top:138.65px;line-height:15.35px;text-align:left;color:#3a3a3a">s20240003</div>
<svg class="a" style="left:60.7px;top:141.25px" width="7.4" height="6.8" viewBox="0 0 7.4 6.8"><path d="M0.3 6.5 C0.6 3.4 2.6 0.9 7.1 0.3 C7 3.6 5.2 6.1 1.9 5.6 C1.4 5.9 0.9 6.3 0.6 6.7 Z" fill="#f5f5f5"/><path d="M1.2 5.8 C2.8 4 4.6 2.2 6.6 0.8" stroke="#f5f5f5" stroke-width="0.4" fill="none"/></svg>
<div class="c" style="left:74.6px;top:138.65px;line-height:15.35px;text-align:left;color:#4252c4">学生0003</div>
<div class="c" style="left:111.8px;top:138.65px;line-height:15.35px;text-align:left;color:#3a3a3a">留学生</div>
<div class="c" style="left:134.2px;top:138.65px;line-height:15.35px;text-align:left;color:#3a3a3a">工学部</div>
<div class="c" style="left:170.2px;top:138.65px;line-height:15.35px;text-align:left;color:#3a3a3a">研究室所属</div>
<div class="c" style="left:204.6px;top:138.65px;width:37.3px;line-height:15.35px">2023年</div>
<div class="c" style="left:241.9px;top:138.65px;width:22.5px;line-height:15.35px">3年</div>
<div class="c" style="left:264.4px;top:138.65px;width:21.7px;line-height:15.35px">在学中</div>
<div class="c" style="left:286.1px;top:138.65px;width:22px;line-height:15.35px">110</div>
<div class="c" style="left:308.1px;top:138.65px;width:36.8px;line-height:15.35px">59</div>
<div class="c" style="left:344.9px;top:138.65px;width:36.7px;line-height:15.35px">94%</div>
<div class="c" style="left:381.6px;top:138.65px;width:37.6px;line-height:15.35px">41</div>
<div class="c" style="left:419.2px;top:138.65px;width:37.4px;line-height:15.35px">86%</div>
<div class="c" style="left:456.6px;top:138.65px;width:36.7px;line-height:15.35px">18回</div>
<div class="c" style="left:493.3px;top:138.65px;width:36.1px;line-height:15.35px">なし</div>
<div class="c" style="left:529.4px;top:138.65px;width:36.7px;line-height:15.35px">97%</div>
<div class="c" style="left:566.1px;top:138.65px;width:36.7px;line-height:15.35px">53</div>
<div class="c" style="left:602.8px;top:138.65px;width:37.7px;line-height:15.35px">395回</div>
<div class="a" style="left:639.9px;top:138.15px;width:36.6px;height:15.35px;background:#f8f9d6"></div>
<div class="c" style="left:640.5px;top:138.65px;width:36.6px;line-height:15.35px">50回</div>
<div class="c" style="left:677.1px;top:138.65px;width:36.5px;line-height:15.35px">なし</div>
<div class="c" style="left:713.6px;top:138.65px;width:36.7px;line-height:15.35px">51</div>
<div class="c" style="left:750.3px;top:138.65px;width:37.5px;line-height:15.35px">52</div>
<div class="a" style="left:787.2px;top:138.15px;width:37.1px;height:15.35px;background:#ebebeb"></div>
<div class="rl" style="left:0;top:168.45px;width:824.3px"></div>
<div class="a" style="left:2.9px;top:155.6px;width:12.3px;height:9.8px;background:#ededf2;border-radius:1.5px"></div>
<svg class="a" style="left:6.9px;top:157.2px" width="5.6" height="6.2" viewBox="0 0 5.6 6.2"><circle cx="2.8" cy="1.6" r="1.5" fill="#2b43a6"/><path d="M0.3 6 V5.3 C0.3 4.1 1.4 3.5 2.8 3.5 C4.2 3.5 5.3 4.1 5.3 5.3 V6 Z" fill="#3550c8"/></svg>
<div class="c" style="left:20.4px;top:154px;line-height:15.35px;text-align:left;color:#3a3a3a">s20240010</div>
<svg class="a" style="left:60.7px;top:156.6px" width="7.4" height="6.8" viewBox="0 0 7.4 6.8"><path d="M0.3 6.5 C0.6 3.4 2.6 0.9 7.1 0.3 C7 3.6 5.2 6.1 1.9 5.6 C1.4 5.9 0.9 6.3 0.6 6.7 Z" fill="#f5f5f5"/><path d="M1.2 5.8 C2.8 4 4.6 2.2 6.6 0.8" stroke="#f5f5f5" stroke-width="0.4" fill="none"/></svg>
<div class="c" style="left:74.6px;top:154px;line-height:15.35px;text-align:left;color:#4252c4">学生0010</div>
<div class="c" style="left:134.2px;top:154px;line-height:15.35px;text-align:left;color:#3a3a3a">法学部</div>
<div class="c" style="left:204.6px;top:154px;width:37.3px;line-height:15.35px">2023年</div>
<div class="c" style="left:241.9px;top:154px;width:22.5px;line-height:15.35px">3年</div>
<div class="c" style="left:264.4px;top:154px;width:21.7px;line-height:15.35px">在学中</div>
<div class="c" style="left:286.1px;top:154px;width:22px;line-height:15.35px">95</div>
<div class="c" style="left:308.1px;top:154px;width:36.8px;line-height:15.35px">73</div>
<div class="c" style="left:344.9px;top:154px;width:36.7px;line-height:15.35px">94%</div>
<div class="c" style="left:381.6px;top:154px;width:37.6px;line-height:15.35px">50</div>
<div class="c" style="left:419.2px;top:154px;width:37.4px;line-height:15.35px">92%</div>
<div class="c" style="left:456.6px;top:154px;width:36.7px;line-height:15.35px">10回</div>
<div class="c" style="left:493.3px;top:154px;width:36.1px;line-height:15.35px">なし</div>
<div class="c" style="left:529.4px;top:154px;width:36.7px;line-height:15.35px">94%</div>
<div class="c" style="left:566.1px;top:154px;width:36.7px;line-height:15.35px">46</div>
<div class="c" style="left:602.8px;top:154px;width:37.7px;line-height:15.35px">404回</div>
<div class="a" style="left:639.9px;top:153.5px;width:36.6px;height:15.35px;background:#f8f9d6"></div>
<div class="c" style="left:640.5px;top:154px;width:36.6px;line-height:15.35px">50回</div>
<div class="c" style="left:677.1px;top:154px;width:36.5px;line-height:15.35px">なし</div>
<div class="a" style="left:713px;top:153.5px;width:36.7px;height:15.35px;background:#ebebeb"></div>
<div class="c" style="left:750.3px;top:154px;width:37.5px;line-height:15.35px">66</div>
<div class="a" style="left:787.2px;top:153.5px;width:37.1px;height:15.35px;background:#ebebeb"></div>
<div class="rl" style="left:0;top:183.8px;width:824.3px"></div>
<div class="a" style="left:2.9px;top:170.95px;width:12.3px;height:9.8px;background:#ededf2;border-radius:1.5px"></div>
<svg class="a" style="left:6.9px;top:172.55px" width="5.6" height="6.2" viewBox="0 0 5.6 6.2"><circle cx="2.8" cy="1.6" r="1.5" fill="#2b43a6"/><path d="M0.3 6 V5.3 C0.3 4.1 1.4 3.5 2.8 3.5 C4.2 3.5 5.3 4.1 5.3 5.3 V6 Z" fill="#3550c8"/></svg>
<div class="c" style="left:20.4px;top:169.35px;line-height:15.35px;text-align:left;color:#3a3a3a">s20240016</div>
<svg class="a" style="left:60.7px;top:171.95px" width="7.4" height="6.8" viewBox="0 0 7.4 6.8"><path d="M0.3 6.5 C0.6 3.4 2.6 0.9 7.1 0.3 C7 3.6 5.2 6.1 1.9 5.6 C1.4 5.9 0.9 6.3 0.6 6.7 Z" fill="#f5f5f5"/><path d="M1.2 5.8 C2.8 4 4.6 2.2 6.6 0.8" stroke="#f5f5f5" stroke-width="0.4" fill="none"/></svg>
<div class="c" style="left:74.6px;top:169.35px;line-height:15.35px;text-align:left;color:#4252c4">学生0016</div>
<div class="c" style="left:111.8px;top:169.35px;line-height:15.35px;text-align:left;color:#3a3a3a">留学生</div>
<div class="c" style="left:134.2px;top:169.35px;line-height:15.35px;text-align:left;color:#3a3a3a">経済学部</div>
<div class="c" style="left:204.6px;top:169.35px;width:37.3px;line-height:15.35px">2023年</div>
<div class="c" style="left:241.9px;top:169.35px;width:22.5px;line-height:15.35px">3年</div>
<div class="c" style="left:264.4px;top:169.35px;width:21.7px;line-height:15.35px">在学中</div>
<div class="c" style="left:286.1px;top:169.35px;width:22px;line-height:15.35px">112</div>
<div class="c" style="left:308.1px;top:169.35px;width:36.8px;line-height:15.35px">74</div>
<div class="c" style="left:344.9px;top:169.35px;width:36.7px;line-height:15.35px">94%</div>
<div class="c" style="left:381.6px;top:169.35px;width:37.6px;line-height:15.35px">50</div>
<div class="c" style="left:419.2px;top:169.35px;width:37.4px;line-height:15.35px">100%</div>
<div class="c" style="left:456.6px;top:169.35px;width:36.7px;line-height:15.35px">0回</div>
<div class="c" style="left:493.3px;top:169.35px;width:36.1px;line-height:15.35px">なし</div>
<div class="c" style="left:529.4px;top:169.35px;width:36.7px;line-height:15.35px">98%</div>
<div class="c" style="left:566.1px;top:169.35px;width:36.7px;line-height:15.35px">50</div>
<div class="c" style="left:602.8px;top:169.35px;width:37.7px;line-height:15.35px">393回</div>
<div class="a" style="left:639.9px;top:168.85px;width:36.6px;height:15.35px;background:#f8f9d6"></div>
<div class="c" style="left:640.5px;top:169.35px;width:36.6px;line-height:15.35px">50回</div>
<div class="c" style="left:677.1px;top:169.35px;width:36.5px;line-height:15.35px">なし</div>
<div class="c" style="left:713.6px;top:169.35px;width:36.7px;line-height:15.35px">66</div>
<div class="c" style="left:750.3px;top:169.35px;width:37.5px;line-height:15.35px">62</div>
<div class="a" style="left:787.2px;top:168.85px;width:37.1px;height:15.35px;background:#ebebeb"></div>
<div class="rl" style="left:0;top:199.15px;width:824.3px"></div>
<div class="a" style="left:2.9px;top:186.3px;width:12.3px;height:9.8px;background:#ededf2;border-radius:1.5px"></div>
<svg class="a" style="left:6.9px;top:187.9px" width="5.6" height="6.2" viewBox="0 0 5.6 6.2"><circle cx="2.8" cy="1.6" r="1.5" fill="#2b43a6"/><path d="M0.3 6 V5.3 C0.3 4.1 1.4 3.5 2.8 3.5 C4.2 3.5 5.3 4.1 5.3 5.3 V6 Z" fill="#3550c8"/></svg>
<div class="c" style="left:20.4px;top:184.7px;line-height:15.35px;text-align:left;color:#3a3a3a">s20240020</div>
<svg class="a" style="left:60.7px;top:187.3px" width="7.4" height="6.8" viewBox="0 0 7.4 6.8"><path d="M0.3 6.5 C0.6 3.4 2.6 0.9 7.1 0.3 C7 3.6 5.2 6.1 1.9 5.6 C1.4 5.9 0.9 6.3 0.6 6.7 Z" fill="#f5f5f5"/><path d="M1.2 5.8 C2.8 4 4.6 2.2 6.6 0.8" stroke="#f5f5f5" stroke-width="0.4" fill="none"/></svg>
<div class="c" style="left:74.6px;top:184.7px;line-height:15.35px;text-align:left;color:#4252c4">学生0020</div>
<div class="c" style="left:134.2px;top:184.7px;line-height:15.35px;text-align:left;color:#3a3a3a">工学部</div>
<div class="c" style="left:204.6px;top:184.7px;width:37.3px;line-height:15.35px">2023年</div>
<div class="c" style="left:241.9px;top:184.7px;width:22.5px;line-height:15.35px">3年</div>
<div class="c" style="left:264.4px;top:184.7px;width:21.7px;line-height:15.35px">在学中</div>
<div class="c" style="left:286.1px;top:184.7px;width:22px;line-height:15.35px">107</div>
<div class="c" style="left:308.1px;top:184.7px;width:36.8px;line-height:15.35px">71</div>
<div class="c" style="left:344.9px;top:184.7px;width:36.7px;line-height:15.35px">93%</div>
<div class="c" style="left:381.6px;top:184.7px;width:37.6px;line-height:15.35px">53</div>
<div class="c" style="left:419.2px;top:184.7px;width:37.4px;line-height:15.35px">87%</div>
<div class="c" style="left:456.6px;top:184.7px;width:36.7px;line-height:15.35px">16回</div>
<div class="c" style="left:493.3px;top:184.7px;width:36.1px;line-height:15.35px">なし</div>
<div class="c" style="left:529.4px;top:184.7px;width:36.7px;line-height:15.35px">98%</div>
<div class="c" style="left:566.1px;top:184.7px;width:36.7px;line-height:15.35px">46</div>
<div class="c" style="left:602.8px;top:184.7px;width:37.7px;line-height:15.35px">421回</div>
<div class="a" style="left:639.9px;top:184.2px;width:36.6px;height:15.35px;background:#f8f9d6"></div>
<div class="c" style="left:640.5px;top:184.7px;width:36.6px;line-height:15.35px">50回</div>
<div class="c" style="left:677.1px;top:184.7px;width:36.5px;line-height:15.35px">なし</div>
<div class="c" style="left:713.6px;top:184.7px;width:36.7px;line-height:15.35px">74</div>
<div class="c" style="left:750.3px;top:184.7px;width:37.5px;line-height:15.35px">53</div>
<div class="a" style="left:787.2px;top:184.2px;width:37.1px;height:15.35px;background:#ebebeb"></div>
<div class="rl" style="left:0;top:214.5px;width:824.3px"></div>
<div class="a" style="left:2.9px;top:201.65px;width:12.3px;height:9.8px;background:#ededf2;border-radius:1.5px"></div>
<svg class="a" style="left:6.9px;top:203.25px" width="5.6" height="6.2" viewBox="0 0 5.6 6.2"><circle cx="2.8" cy="1.6" r="1.5" fill="#2b43a6"/><path d="M0.3 6 V5.3 C0.3 4.1 1.4 3.5 2.8 3.5 C4.2 3.5 5.3 4.1 5.3 5.3 V6 Z" fill="#3550c8"/></svg>
<div class="c" style="left:20.4px;top:200.05px;line-height:15.35px;text-align:left;color:#3a3a3a">s20240006</div>
<svg class="a" style="left:60.7px;top:202.65px" width="7.4" height="6.8" viewBox="0 0 7.4 6.8"><path d="M0.3 6.5 C0.6 3.4 2.6 0.9 7.1 0.3 C7 3.6 5.2 6.1 1.9 5.6 C1.4 5.9 0.9 6.3 0.6 6.7 Z" fill="#f5f5f5"/><path d="M1.2 5.8 C2.8 4 4.6 2.2 6.6 0.8" stroke="#f5f5f5" stroke-width="0.4" fill="none"/></svg>
<div class="c" style="left:74.6px;top:200.05px;line-height:15.35px;text-align:left;color:#4252c4">学生0006</div>
<div class="c" style="left:111.8px;top:200.05px;line-height:15.35px;text-align:left;color:#3a3a3a">留学生</div>
<div class="c" style="left:134.2px;top:200.05px;line-height:15.35px;text-align:left;color:#3a3a3a">工学部</div>
<div class="c" style="left:204.6px;top:200.05px;width:37.3px;line-height:15.35px">2023年</div>
<div class="c" style="left:241.9px;top:200.05px;width:22.5px;line-height:15.35px">3年</div>
<div class="c" style="left:264.4px;top:200.05px;width:21.7px;line-height:15.35px">在学中</div>
<div class="c" style="left:286.1px;top:200.05px;width:22px;line-height:15.35px">93</div>
<div class="c" style="left:308.1px;top:200.05px;width:36.8px;line-height:15.35px">64</div>
<div class="c" style="left:344.9px;top:200.05px;width:36.7px;line-height:15.35px">93%</div>
<div class="c" style="left:381.6px;top:200.05px;width:37.6px;line-height:15.35px">49</div>
<div class="c" style="left:419.2px;top:200.05px;width:37.4px;line-height:15.35px">90%</div>
<div class="c" style="left:456.6px;top:200.05px;width:36.7px;line-height:15.35px">12回</div>
<div class="c" style="left:493.3px;top:200.05px;width:36.1px;line-height:15.35px">なし</div>
<div class="c" style="left:529.4px;top:200.05px;width:36.7px;line-height:15.35px">100%</div>
<div class="c" style="left:566.1px;top:200.05px;width:36.7px;line-height:15.35px">49</div>
<div class="c" style="left:602.8px;top:200.05px;width:37.7px;line-height:15.35px">402回</div>
<div class="a" style="left:639.9px;top:199.55px;width:36.6px;height:15.35px;background:#f8f9d6"></div>
<div class="c" style="left:640.5px;top:200.05px;width:36.6px;line-height:15.35px">50回</div>
<div class="c" style="left:677.1px;top:200.05px;width:36.5px;line-height:15.35px">なし</div>
<div class="c" style="left:713.6px;top:200.05px;width:36.7px;line-height:15.35px">54</div>
<div class="c" style="left:750.3px;top:200.05px;width:37.5px;line-height:15.35px">54</div>
<div class="a" style="left:787.2px;top:199.55px;width:37.1px;height:15.35px;background:#ebebeb"></div>
<div class="vl" style="left:17px;top:0;height:212.5px"></div>
<div class="vl" style="left:55.1px;top:0;height:212.5px"></div>
<div class="vl" style="left:71.2px;top:0;height:212.5px"></div>
<div class="vl" style="left:108.4px;top:0;height:212.5px"></div>
<div class="vl" style="left:130.8px;top:0;height:212.5px"></div>
<div class="vl" style="left:166.8px;top:0;height:212.5px"></div>
<div class="vl" style="left:203.6px;top:0;height:212.5px"></div>
<div class="vl" style="left:240.9px;top:0;height:212.5px"></div>
<div class="vl" style="left:263.4px;top:0;height:212.5px"></div>
<div class="vl" style="left:285.1px;top:0;height:212.5px"></div>
<div class="vl" style="left:307.1px;top:0;height:212.5px"></div>
<div class="vl" style="left:343.9px;top:0;height:212.5px"></div>
<div class="vl" style="left:380.6px;top:0;height:212.5px"></div>
<div class="vl" style="left:418.2px;top:0;height:212.5px"></div>
<div class="vl" style="left:455.6px;top:0;height:212.5px"></div>
<div class="vl" style="left:492.3px;top:0;height:212.5px"></div>
<div class="vl" style="left:528.4px;top:0;height:212.5px"></div>
<div class="vl" style="left:565.1px;top:0;height:212.5px"></div>
<div class="vl" style="left:601.8px;top:0;height:212.5px"></div>
<div class="vl" style="left:639.5px;top:0;height:212.5px"></div>
<div class="vl" style="left:676.1px;top:0;height:212.5px"></div>
<div class="vl" style="left:712.6px;top:0;height:212.5px"></div>
<div class="vl" style="left:749.3px;top:0;height:212.5px"></div>
<div class="vl" style="left:786.8px;top:0;height:212.5px"></div>
</div>
<svg class="a" style="left:832px;top:183px" width="4" height="3" viewBox="0 0 4 3"><path d="M0.4 2.6 L2 0.6 L3.6 2.6 Z" fill="#505050"/></svg>
<div class="a" style="left:832px;top:188.7px;width:4.1px;height:135px;background:#8a8a8a;border-radius:2px"></div>
<svg class="a" style="left:832px;top:387px" width="4" height="3" viewBox="0 0 4 3"><path d="M0.4 0.4 L2 2.4 L3.6 0.4 Z" fill="#505050"/></svg>
<div class="a" style="left:21.5px;top:398px;font-size:5px;line-height:7px;color:#333">件数: 20</div></body></html>
